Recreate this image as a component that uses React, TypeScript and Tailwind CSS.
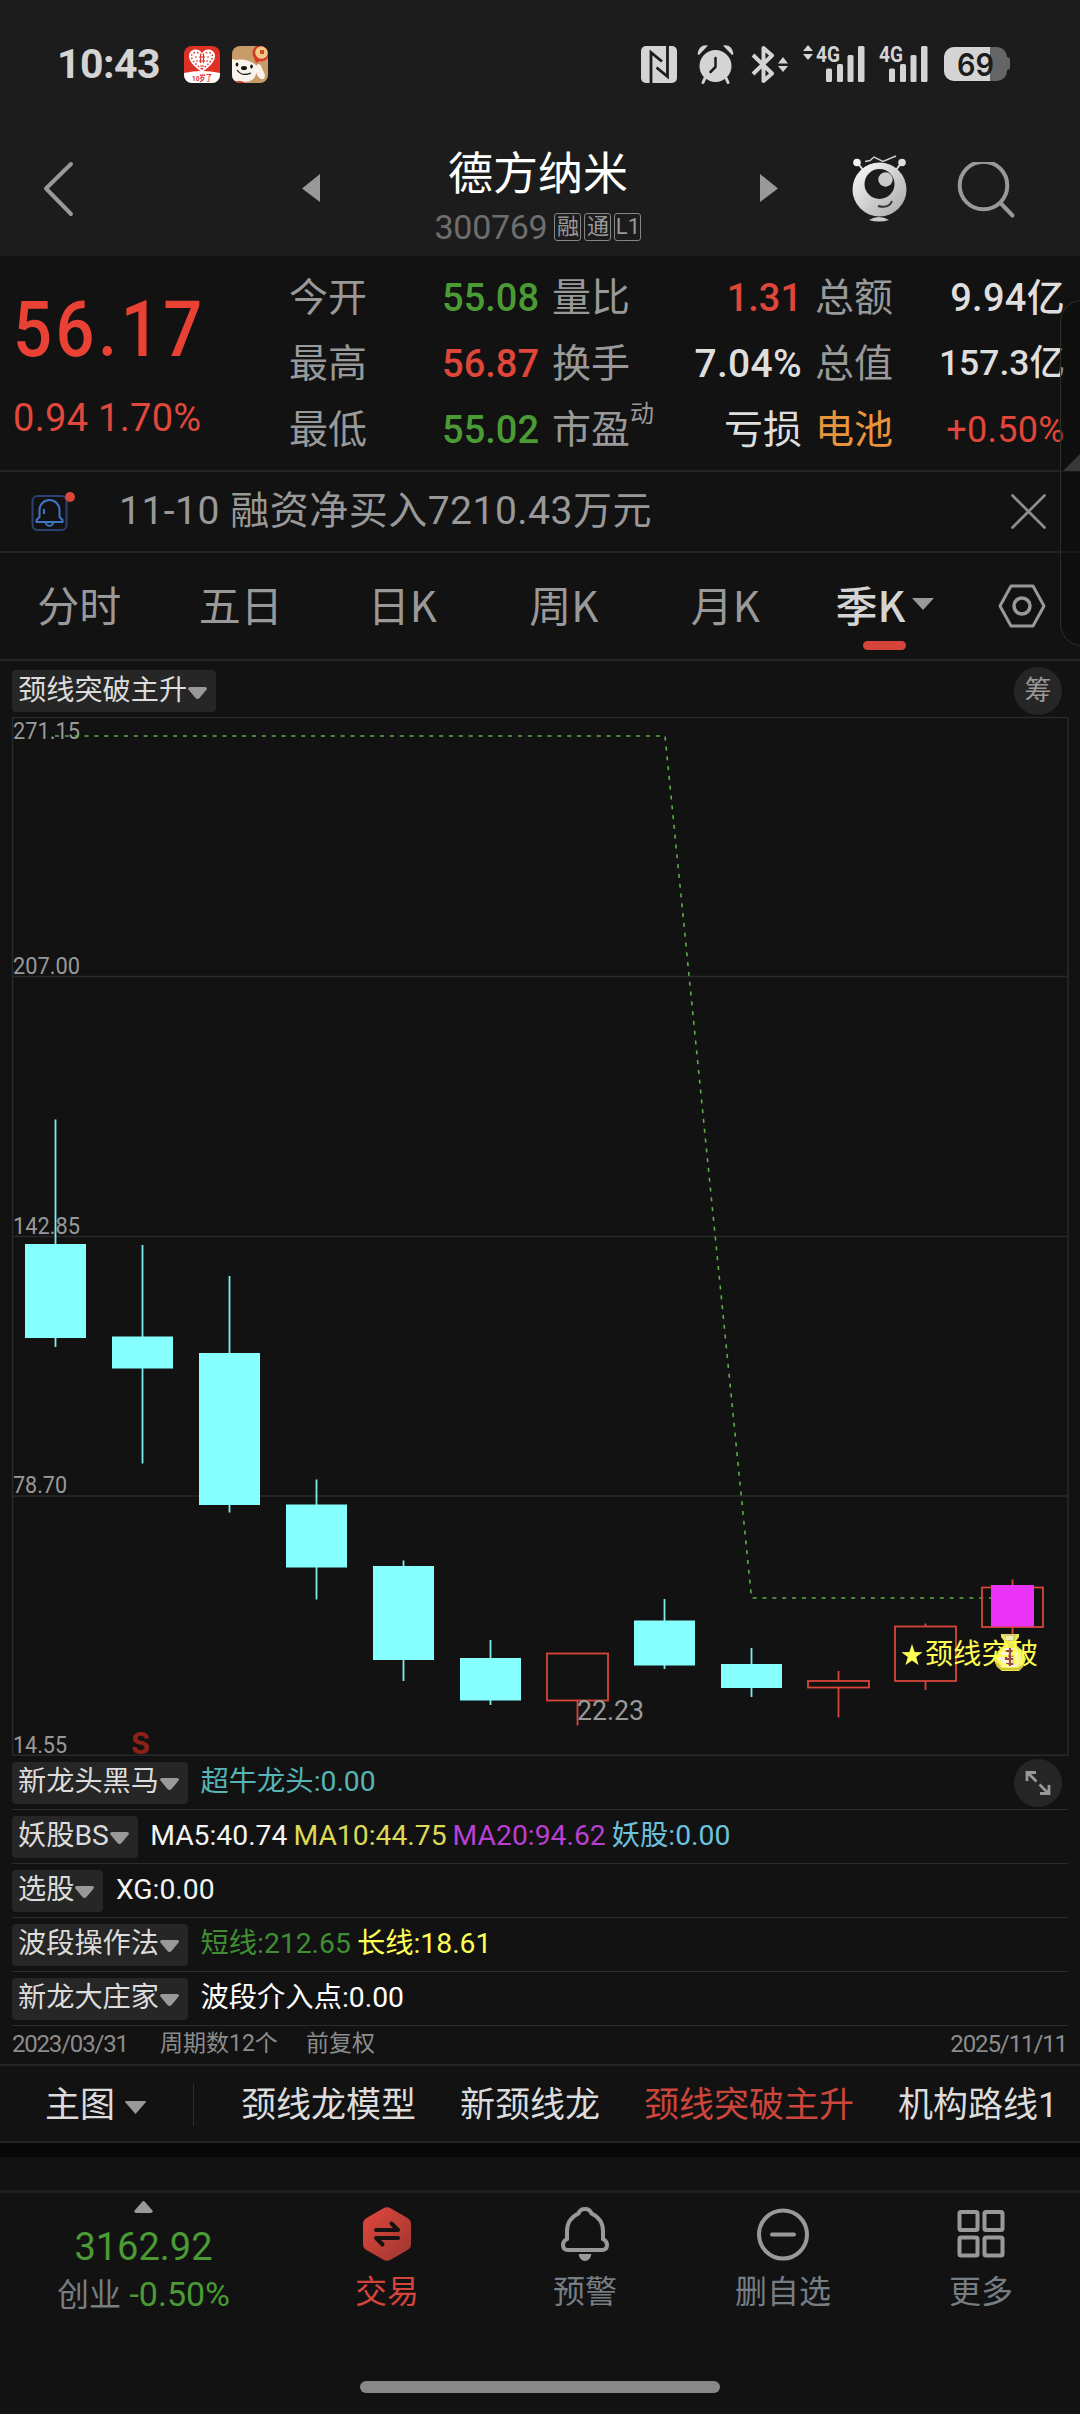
import React from 'react'
import clsx from 'clsx'

const CJK = "font-['Noto_Sans_CJK_SC',sans-serif]"

interface Quote {
    label: string;
    value: string;
    labelClass?: string;
    valueClass: string;
    sup?: string;
}

const quoteColumns: { width: string; rows: Quote[] }[] = [
    {
        width: 'w-[250px]',
        rows: [
            { label: '今开', value: '55.08', valueClass: 'text-[#4b9b35] font-medium text-[38px]' },
            { label: '最高', value: '56.87', valueClass: 'text-[#e0463a] font-medium text-[38px]' },
            { label: '最低', value: '55.02', valueClass: 'text-[#4b9b35] font-medium text-[38px]' },
        ],
    },
    {
        width: 'w-[250px] ml-[13px]',
        rows: [
            { label: '量比', value: '1.31', valueClass: 'text-[#e0463a] font-medium text-[38px]' },
            { label: '换手', value: '7.04%', valueClass: 'text-[#dedede] font-medium text-[39px] tracking-[0.3px]' },
            { label: '市盈', sup: '动', value: '亏损', valueClass: 'text-[#dedede] text-[39px]' },
        ],
    },
    {
        width: 'w-[250px] ml-[13px]',
        rows: [
            { label: '总额', value: '9.94亿', valueClass: 'text-[#dedede] font-medium text-[38px] tracking-[0.3px]' },
            { label: '总值', value: '157.3亿', valueClass: 'text-[#dedede] font-medium text-[35.5px]' },
            { label: '电池', labelClass: 'text-[#e8943c]', value: '+0.50%', valueClass: 'text-[#e0463a] text-[36px] tracking-[0.3px]' },
        ],
    },
]

const periods = ['分时', '五日', '日K', '周K', '月K']

type Candle = { high: number; top: number; bottom: number; low: number; up?: boolean }

// pixel rows inside the 1080 x 1042 plot
const candles: Candle[] = [
    { high: 405.5, top: 530, bottom: 624, low: 633 },
    { high: 531, top: 622.5, bottom: 654.5, low: 749.5 },
    { high: 562, top: 639, bottom: 791, low: 798.5 },
    { high: 765.5, top: 790.5, bottom: 853.5, low: 885.5 },
    { high: 846.5, top: 852, bottom: 946, low: 967 },
    { high: 926, top: 944, bottom: 986.5, low: 991 },
    { high: 939.5, top: 939.5, bottom: 986.5, low: 1011.5, up: true },
    { high: 885, top: 906.5, bottom: 951.5, low: 955 },
    { high: 934, top: 950, bottom: 974, low: 983 },
    { high: 957, top: 967, bottom: 973.5, low: 1003.5, up: true },
    { high: 909.5, top: 912.5, bottom: 967, low: 976, up: true },
    { high: 865.5, top: 873.5, bottom: 913, low: 930, up: true },
]

const gridLines = [
    { y: 3.5, label: '271.15', base: 25, width: 67 },
    { y: 262.5, label: '207.00', base: 260, width: 67 },
    { y: 522.5, label: '142.85', base: 520, width: 67 },
    { y: 782, label: '78.70', base: 779, width: 54 },
    { y: 1041.3, label: '14.55', base: 1039, width: 54 },
]

const indicators: { name: string; values: { text: string; color: string }[] }[] = [
    { name: '新龙头黑马', values: [{ text: '超牛龙头:0.00', color: 'text-[#56b4b4]' }] },
    {
        name: '妖股BS',
        values: [
            { text: 'MA5:40.74', color: 'text-[#f4f4f4]' },
            { text: 'MA10:44.75', color: 'text-[#dcd956]' },
            { text: 'MA20:94.62', color: 'text-[#bb3fd2]' },
            { text: '妖股:0.00', color: 'text-[#6cc2de]' },
        ],
    },
    { name: '选股', values: [{ text: 'XG:0.00', color: 'text-[#f4f4f4]' }] },
    {
        name: '波段操作法',
        values: [
            { text: '短线:212.65', color: 'text-[#3f8f32]' },
            { text: '长线:18.61', color: 'text-[#ffff54]' },
        ],
    },
    { name: '新龙大庄家', values: [{ text: '波段介入点:0.00', color: 'text-white' }] },
]

const SignalIcon = ({ arrows }: { arrows?: boolean }) => (
    <svg className="overflow-visible" width="64" height="40" viewBox="0 0 64 40" fill="#d4d4d4">
        {arrows && <path d="M7 1l5 6H2zM7 16l5-6H2z" />}
        <text x="15" y="18" fontSize="22" fontWeight="700" fontFamily="Roboto, sans-serif" textLength="24" lengthAdjust="spacingAndGlyphs">4G</text>
        <rect x="25" y="24.500" width="6" height="13.500" rx="1.500" />
        <rect x="36" y="20" width="6" height="18" rx="1.500" />
        <rect x="46.500" y="11" width="6" height="27" rx="1.500" />
        <rect x="57" y="2" width="6.500" height="36" rx="1.500" />
    </svg>
)

const StatusBar = () => (
    <div className="flex h-[128px] items-center pl-[57px] pr-[69px] text-[#d4d4d4]">
        <span className="w-[127px] text-[41px] font-bold leading-none tracking-[-0.5px]">10:43</span>

        <svg width="36" height="37" viewBox="0 0 36 37">
            <rect width="36" height="37" rx="8" fill="#e03127" />
            <path d="M0 27q18-4 36 0v2a8 8 0 0 1-8 8H8a8 8 0 0 1-8-8z" fill="#fff" />
            <path d="M18 26C10 21 5 15 5 10c0-7 9-9 13-3 4-6 13-4 13 3 0 5-5 11-13 16z" fill="#fff" />
            <path d="M18 23C12 19 7.500 14 7.500 10.500c0-4.500 6.500-6 10.500-1 4-5 10.500-3.500 10.500 1 0 3.500-4.500 8.500-10.500 12.500z" fill="none" stroke="#e03127" strokeWidth="1.500" strokeDasharray="1.500 2" />
            <path d="M15 11h6M15 15h6M16.500 9v8M19.500 9v8M11 11h2M23 11h2M12 15h2M22 15h2M16 20h4" stroke="#e03127" strokeWidth="1.200" />
            <text x="8" y="35" fontSize="7.500" fontWeight="700" fill="#e03127" fontFamily="Roboto, 'Noto Sans CJK SC', sans-serif" textLength="20" lengthAdjust="spacingAndGlyphs">10岁了</text>
        </svg>
        <svg className="ml-3" width="36" height="37" viewBox="0 0 36 37">
            <defs>
                <clipPath id="dogClip"><rect width="36" height="37" rx="8" /></clipPath>
            </defs>
            <g clipPath="url(#dogClip)">
                <rect width="36" height="37" fill="#c79c68" />
                <path d="M0 13l4 1q10-2 20 5 1 4 0 9-2 8-12 8-8 0-12-3z" fill="#f7f2ea" />
                <path d="M24 20q3-4 5 0l4 9q0 5-4 4-4-2-5-7z" fill="#f7f2ea" />
                <path d="M3 36q4-2 9 0v1H3z" fill="#d8352a" />
                <path d="M22 12l2 5 5-3z" fill="#d5372a" />
                <circle cx="29" cy="7" r="8.500" fill="#d5372a" />
                <circle cx="29.500" cy="6.500" r="6.300" fill="#f3c983" />
                <rect x="28" y="4" width="4" height="4" fill="#cf4a2a" />
                <ellipse cx="12" cy="22" rx="3" ry="2" fill="#111" />
                <ellipse cx="5" cy="18.500" rx="1.300" ry="2" fill="#111" />
                <ellipse cx="19.500" cy="20.500" rx="1.300" ry="2" fill="#111" />
                <path d="M5 24q5 7 14 3" fill="none" stroke="#111" strokeWidth="1.200" />
            </g>
        </svg>

        <div className="ml-auto flex items-center">
            {/* NFC */}
            <svg width="36" height="37" viewBox="0 0 36 37">
                <rect width="36" height="37" rx="5" fill="#d4d4d4" />
                <path d="M10 37V6.500l11 9M26.500 0v30.500l-11-9" fill="none" stroke="#1c1c1c" strokeWidth="2.800" />
            </svg>
            {/* Alarm */}
            <svg className="ml-5" width="37" height="39" viewBox="0 0 37 39">
                <path d="M8 33l-2 4.500M29 33l2 4.500" stroke="#d4d4d4" strokeWidth="3" strokeLinecap="round" />
                <circle cx="18.500" cy="21" r="16" fill="#d4d4d4" />
                <path d="M.5 9Q2-1 11 .5L2 10zM36.500 9Q35-1 26 .5l9 9.500z" fill="#d4d4d4" />
                <path d="M18.500 13v9l-5 5" fill="none" stroke="#1c1c1c" strokeWidth="2.500" strokeLinecap="round" />
            </svg>
            {/* Bluetooth */}
            <svg className="ml-[17px]" width="38" height="39" viewBox="0 0 38 39">
                <path d="M2 10l19 18.500-8.500 7.500V3L21 10.500 2 29" fill="none" stroke="#d4d4d4" strokeWidth="4" strokeLinejoin="round" />
                <path d="M32 12l5 6.500H27zM32 27l5-6H27z" fill="#d4d4d4" />
            </svg>
            <div className="ml-3"><SignalIcon arrows /></div>
            <div className="-ml-px"><SignalIcon /></div>
            {/* Battery */}
            <svg className="ml-4" width="67" height="36" viewBox="0 0 67 36">
                <defs>
                    <clipPath id="cell"><rect y="1" width="63" height="34" rx="10" /></clipPath>
                </defs>
                <g clipPath="url(#cell)">
                    <rect width="67" height="36" fill="#656565" />
                    <rect width="46" height="36" fill="#d4d4d4" />
                </g>
                <path d="M63 11q3 0 3 3v7q0 3-3 3z" fill="#656565" />
                <text x="13" y="29.500" fontSize="31" fontWeight="600" fontFamily="Inter, sans-serif" fill="#1c1c1c" textLength="37" lengthAdjust="spacingAndGlyphs">69</text>
            </svg>
        </div>
    </div>
)

const MarketTag = ({ children }: { children: React.ReactNode }) => (
    <span className="flex h-[28px] w-[27px] items-center justify-center rounded-[3px] border border-[#858585] text-[22px] leading-none text-[#999]">
        {children}
    </span>
)

const TitleBar = () => (
    <div className="flex h-[128px] items-start">
        <svg className="mt-[28px]" width="286" height="64" viewBox="0 0 286 64">
            <path d="M71 8L46 32.500 71 58" fill="none" stroke="#999" strokeWidth="4" strokeLinecap="round" strokeLinejoin="round" />
        </svg>
        <svg className="mt-[46px]" width="36" height="28" viewBox="0 0 36 28">
            <path d="M34 0v28L16 14.500z" fill="#999" />
        </svg>
        <div className="flex w-[432px] flex-col items-center">
            <h1 className="mt-[20px] h-[54px] text-[45px] leading-[54px] text-white">德方纳米</h1>
            <div className="mt-[7px] flex h-[36px] items-center gap-[3px]">
                <span className="mr-[4px] text-[34px] leading-none tracking-[-0.3px] text-[#6e6e6e]">300769</span>
                <MarketTag>融</MarketTag>
                <MarketTag>通</MarketTag>
                <MarketTag>L1</MarketTag>
            </div>
        </div>
        <svg className="mt-[46px]" width="36" height="28" viewBox="0 0 36 28">
            <path d="M6 0v28l18-13.500z" fill="#999" />
        </svg>
        {/* Robot assistant */}
        <svg className="ml-[58px] mt-[24px]" width="64" height="72" viewBox="848 152 64 72">
            <defs>
                <linearGradient id="bot" x1="0" y1="0" x2="1" y2="1">
                    <stop offset="0" stopColor="#fff" />
                    <stop offset="0.55" stopColor="#ccc" />
                    <stop offset="1" stopColor="#a8a8a8" />
                </linearGradient>
            </defs>
            <path d="M857 162l6 8M902 162l-6 8" stroke="#ddd" strokeWidth="2" />
            <circle cx="857" cy="162.500" r="3.800" fill="#f4f4f4" />
            <circle cx="902" cy="162.500" r="3.800" fill="#ddd" />
            <circle cx="879.500" cy="189.500" r="27" fill="url(#bot)" />
            <circle cx="879.500" cy="184" r="15" fill="#1c1c1c" />
            <circle cx="885.500" cy="179.500" r="7.200" fill="#ccc" />
            <path d="M878 206q11 3 14-5" fill="none" stroke="#333" strokeWidth="2" />
            <path d="M865 161.500l5-1 4-3.500 9 4.500 13-5.500" fill="none" stroke="#ccc" strokeWidth="1.400" />
            <path d="M869 220q10-6 20 0-10 3-20 0z" fill="#ccc" />
        </svg>
        <svg className="ml-[44px] mt-[34px]" width="64" height="64" viewBox="956 162 64 64">
            <circle cx="983.500" cy="185.500" r="23.800" fill="none" stroke="#999" strokeWidth="4" />
            <path d="M1000.500 203l12 12.500" stroke="#999" strokeWidth="4" strokeLinecap="round" />
        </svg>
    </div>
)

const QuotePanel = () => (
    <section className="flex h-[216px] border-b-2 border-[#242424]">
        <div className="flex w-[289px] flex-col pl-[13px]">
            <span className="mt-[35px] h-[78px] origin-left scale-x-[0.88] whitespace-nowrap text-[78px] font-medium leading-[78px] tracking-[4px] text-[#e94235]">56.17</span>
            <span className="mt-[27px] text-[38px] leading-[44px] tracking-[0.3px] text-[#e0483c]">0.94 1.70%</span>
        </div>
        {quoteColumns.map((col, i) => (
            <div key={i} className={clsx('flex shrink-0 flex-col pt-[9px]', col.width)}>
                {col.rows.map((q) => (
                    <div key={q.label} className="flex h-[66px] items-center justify-between leading-none">
                        <span className={clsx('flex text-[39px]', q.labelClass ?? 'text-[#999]')}>
                            {q.label}
                            {q.sup && <sup className="-top-1 mt-[-5px] text-[24px] leading-none">{q.sup}</sup>}
                        </span>
                        <span className={q.valueClass}>{q.value}</span>
                    </div>
                ))}
            </div>
        ))}
    </section>
)

const NewsBar = () => (
    <section className="flex h-[81px] items-center border-b-2 border-[#242424]">
        <svg className="ml-[30px]" width="50" height="44" viewBox="30 489 50 44" fill="none">
            <rect x="32.500" y="495" width="34" height="34" rx="5" stroke="#2b4270" strokeWidth="2" />
            <path d="M39.500 516v-7a10 10 0 0 1 20 0v7l3 3v2h-26v-2z" stroke="#3f76c4" strokeWidth="2" strokeLinejoin="round" />
            <path d="M44 508v5" stroke="#3f76c4" strokeWidth="2" />
            <path d="M45.500 522q4 6 8 0" stroke="#3f76c4" strokeWidth="2" />
            <circle cx="70" cy="496" r="5" fill="#d9463c" />
        </svg>
        <p className="ml-[39px] text-[39px] leading-none tracking-[0.5px] text-[#999]">11-10 融资净买入7210.43万元</p>
        <svg className="ml-auto mr-[33px]" width="37" height="37" viewBox="0 0 37 37">
            <path d="M2.500 2.500l32 32M34.500 2.500l-32 32" stroke="#8c8c8c" strokeWidth="2.800" strokeLinecap="round" />
        </svg>
    </section>
)

const PeriodTabs = () => (
    <nav className="flex h-[108px] border-b-2 border-[#242424] text-[42px] leading-none text-[#999]">
        {periods.map((p) => (
            <button key={p} className={clsx('w-[161.500px] pb-[5px] pr-[3px]', CJK)}>{p}</button>
        ))}
        <button className={clsx('relative flex w-[161.500px] items-center pb-[5px] pl-[28px] text-[#d4d4d4]', CJK)}>
            <span className="font-medium">季K</span>
            <svg className="ml-[7px]" width="22" height="12" viewBox="0 0 22 12"><path d="M0 0h22L11 12z" fill="#999" /></svg>
            <span className="absolute bottom-[9px] left-[55px] h-[9px] w-[43px] rounded-full bg-[#d5443a]" />
        </button>
        <svg className="ml-[29px] mt-[29px]" width="48" height="48" viewBox="0 0 48 48" fill="none" stroke="#999" strokeWidth="3">
            <path d="M13 4h22l11 20-11 20H13L2 24z" strokeLinejoin="round" />
            <circle cx="24" cy="24" r="8" strokeWidth="3.500" />
        </svg>
    </nav>
)

const IndicatorPill = ({ name }: { name: string }) => (
    <button className="flex h-[42px] shrink-0 items-center rounded-[4px] bg-[#262626] pl-[6px] pr-[9px] text-[28.200px] leading-none text-[#dcdcdc]">
        <span>{name}</span>
        <svg className="ml-px mt-[3px]" width="19" height="12" viewBox="0 0 19 12">
            <path d="M2 0h15q2 0 2 2L11.500 11q-2 2-4 0L0 2q0-2 2-2z" fill="#999" />
        </svg>
    </button>
)

const MoneyBag = () => (
    <g transform="translate(994 920)">
        <path d="M7 0h18v3l-3 4v4l6 5 4 9-3 8-4 4H8l-5-4-3-7 4-9 6-6V7L7 3z" fill="#efe952" />
        <path d="M9 0h14l-3 7h-7z" fill="#d9cf6a" />
        <path d="M12 2h7v4h-7z" fill="#f5f0b8" />
        <path d="M10 14h12l4 5 1 8-4 6H9l-5-6 1-7z" fill="#f6f2e0" />
        <path d="M11 17h8v5h-7v3h8v5h-8M16 14v18" fill="none" stroke="#96483c" strokeWidth="2.200" />
        <path d="M2 29l5 6h18l4-5" fill="none" stroke="#cfc630" strokeWidth="2" />
    </g>
)

const Chart = () => (
    <svg className="block overflow-visible" width="1080" height="1042" viewBox="0 0 1080 1042" fontFamily="Roboto, 'Noto Sans CJK SC', sans-serif">
        {gridLines.map((g) => (
            <g key={g.label}>
                <path d={`M12 ${g.y}H1068`} stroke="#2a2a2a" strokeWidth="1.500" />
                <text x="13" y={g.base} fontSize="24" fill="#999" textLength={g.width} lengthAdjust="spacingAndGlyphs">{g.label}</text>
            </g>
        ))}
        <path d="M12.500 3v1038.500M1068 3v1038.500" stroke="#2a2a2a" strokeWidth="1.500" />

        {/* Neckline */}
        <path d="M55 22H665L751.500 884H991" fill="none" stroke="#5cae49" strokeWidth="1.600" strokeDasharray="4 5.850" />

        {candles.map((c, i) => {
            const x = 55.5 + i * 87
            return c.up ? (
                <g key={i} stroke="#d8463a" strokeWidth="1.800" fill="none">
                    <path d={`M${x} ${c.high}V${c.top}M${x} ${c.bottom}V${c.low}`} />
                    <rect x={x - 30.5} y={c.top} width="61" height={c.bottom - c.top} />
                </g>
            ) : (
                <g key={i} fill="#86ffff">
                    <path d={`M${x} ${c.high}V${c.low}`} stroke="#7cecec" strokeWidth="1.800" />
                    <rect x={x - 30.5} y={c.top} width="61" height={c.bottom - c.top} />
                </g>
            )
        })}
        <rect x="991" y="871" width="43" height="41.500" fill="#ea33f7" />

        <text x="577" y="1006" fontSize="28" fill="#999" textLength="67" lengthAdjust="spacingAndGlyphs">22.23</text>
        <text x="131" y="1040" fontSize="30" fontWeight="700" fill="#8e2117" fontFamily="Inter, sans-serif" textLength="19" lengthAdjust="spacingAndGlyphs">S</text>
        <MoneyBag />
        <path d="M912 930l2.600 8 8 .2-6.400 4.900 2.300 7.900-6.500-4.600-6.500 4.600 2.300-7.900-6.400-4.900 8-.2z" fill="#ffff54" />
        <text x="925" y="950" fontSize="28" fill="#ffff54" textLength="113">颈线突破</text>
    </svg>
)

const IndicatorRows = () => (
    <div className="px-3">
        {indicators.map((row, i) => (
            <div key={row.name} className="flex h-[54px] items-center border-b border-[#2c2c2c] pr-[6px]">
                <IndicatorPill name={row.name} />
                <div className="ml-[12.500px] flex gap-[6px] whitespace-nowrap text-[28.300px] leading-none">
                    {row.values.map((v) => (
                        <span key={v.text} className={v.color}>{v.text}</span>
                    ))}
                </div>
                {i === 0 && (
                    <button className="ml-auto flex size-[48px] items-center justify-center rounded-full bg-[#262626]">
                        <svg width="26" height="26" viewBox="0 0 26 26" fill="none" stroke="#999" strokeWidth="2.800">
                            <path d="M2 11V2.500h9M2.500 2.500l9 9M24 15v8.500h-9M23.500 23.500l-9-9" />
                        </svg>
                    </button>
                )}
            </div>
        ))}
        <div className="flex h-[38px] items-center pb-[3px] pr-px text-[23px] leading-none text-[#8c8c8c]">
            <span className="w-[148px] text-[24px] tracking-[-1.200px]">2023/03/31</span>
            <span className="w-[146px]">周期数12个</span>
            <span>前复权</span>
            <span className="ml-auto text-[24px] tracking-[-1.100px]">2025/11/11</span>
        </div>
    </div>
)

const ModelBar = () => (
    <div className="flex h-[79px] items-center overflow-hidden whitespace-nowrap border-y-2 border-[#242424] pt-[3px] text-[35px] leading-none text-[#dcdcdc]">
        <span className="ml-[45px]">主图</span>
        <svg className="ml-[10px] mt-[4px]" width="21" height="13" viewBox="0 0 21 13"><path d="M1 0h19q1 0 1 1L10.500 13 0 1q0-1 1-1z" fill="#999" /></svg>
        <span className="ml-[47px] h-[42px] w-px bg-[#2e2e2e]" />
        <span className="ml-[47px]">颈线龙模型</span>
        <span className="ml-[44px]">新颈线龙</span>
        <span className="ml-[44px] text-[#cc463c]">颈线突破主升</span>
        <span className="ml-[44px]">机构路线1</span>
    </div>
)

const NavItem = ({ label, className, children }: { label: string; className?: string; children: React.ReactNode }) => (
    <button className={clsx('flex flex-1 flex-col items-center pt-[13px] text-[32px] leading-none', className ?? 'text-[#767d83]')}>
        <svg width="56" height="56" viewBox="0 0 56 56" fill="none" stroke="#999" strokeWidth="4">{children}</svg>
        <span className="mt-[14px]">{label}</span>
    </button>
)

const BottomNav = () => (
    <footer className="border-t-[3px] border-[#1e1e1e]">
        <div className="flex h-[188px]">
            <div className="flex w-[288px] flex-col items-center pr-px text-[#4b9b35]">
                <svg className="mt-2" width="19" height="12" viewBox="0 0 19 12"><path d="M2 12h15q3-1 1-3L11 1q-1.500-2-3 0L1 9q-2 2 1 3z" fill="#999" /></svg>
                <span className="mt-[12px] text-[38px] leading-[44px]">3162.92</span>
                <span className="mt-[3px] text-[34px] leading-[44px]"><span className="text-[32px] text-[#767d83]">创业</span> -0.50%</span>
            </div>
            <NavItem label="交易" className="text-[#d5443a]">
                <defs>
                    <linearGradient id="hex" x1="0" y1="0" x2="1" y2="1">
                        <stop offset="0.2" stopColor="#d5443a" />
                        <stop offset="1" stopColor="#9c3630" />
                    </linearGradient>
                </defs>
                <path d="M24 2.500q4-2.500 8 0l16.500 9.500q3.500 2 3.500 6v20q0 4-3.500 6L32 53.500q-4 2.500-8 0L7.500 44Q4 42 4 38V18q0-4 3.500-6z" fill="url(#hex)" stroke="none" />
                <path d="M17 24h22l-6.500-6.500M39 32H17l6.500 6.500" stroke="#161212" strokeLinecap="round" strokeLinejoin="round" />
            </NavItem>
            <NavItem label="预警">
                <path d="M28 3q5 0 6.500 4.500Q46 13 46 25v8q4 2 4 6 0 5-5 5H11q-5 0-5-5 0-4 4-6v-8q0-12 11.500-17.500Q23 3 28 3z" />
                <path d="M21.500 48h13q-1.500 7-6.500 7t-6.500-7z" fill="#999" stroke="none" />
            </NavItem>
            <NavItem label="删自选">
                <circle cx="28" cy="28.500" r="24" />
                <path d="M17 28.500h22" strokeLinecap="round" />
            </NavItem>
            <NavItem label="更多">
                <rect x="6.500" y="6" width="18" height="18" rx="1.500" />
                <rect x="31.500" y="6" width="18" height="18" rx="1.500" />
                <rect x="6.500" y="31.500" width="18" height="18" rx="1.500" />
                <rect x="31.500" y="31.500" width="18" height="18" rx="1.500" />
            </NavItem>
        </div>
        <div className="mx-auto h-3 w-[360px] rounded-full bg-[#888]" />
    </footer>
)

export default function App() {
    return (
        <div className="relative h-[2414px] w-[1080px] overflow-hidden bg-[#121212] font-[Roboto,'Noto_Sans_CJK_SC',sans-serif]">
            <header className="h-[256px] bg-[#1c1c1c]">
                <StatusBar />
                <TitleBar />
            </header>
            <QuotePanel />
            <NewsBar />
            <PeriodTabs />
            <div className="flex h-[53px] items-center justify-between pl-3 pr-[18px] pt-[7px]">
                <IndicatorPill name="颈线突破主升" />
                <span className="flex size-[48px] items-center justify-center rounded-full bg-[#262626] text-[27px] leading-none text-[#999]">筹</span>
            </div>
            <Chart />
            <IndicatorRows />
            <ModelBar />
            <div className="h-[14px] bg-[#070707]" />
            <div className="h-[33px]" />
            <BottomNav />

            {/* Edge drawer handle floating over the right side */}
            <div className="absolute left-[1060px] top-[300px] h-[346px] w-[60px] rounded-[22px] border border-[#2b3322] bg-[#0c0c0c]/40" />
            <svg className="absolute right-0 top-[454px]" width="17" height="17" viewBox="0 0 17 17"><path d="M17 0v17H0z" fill="#383838" /></svg>
        </div>
    )
}
